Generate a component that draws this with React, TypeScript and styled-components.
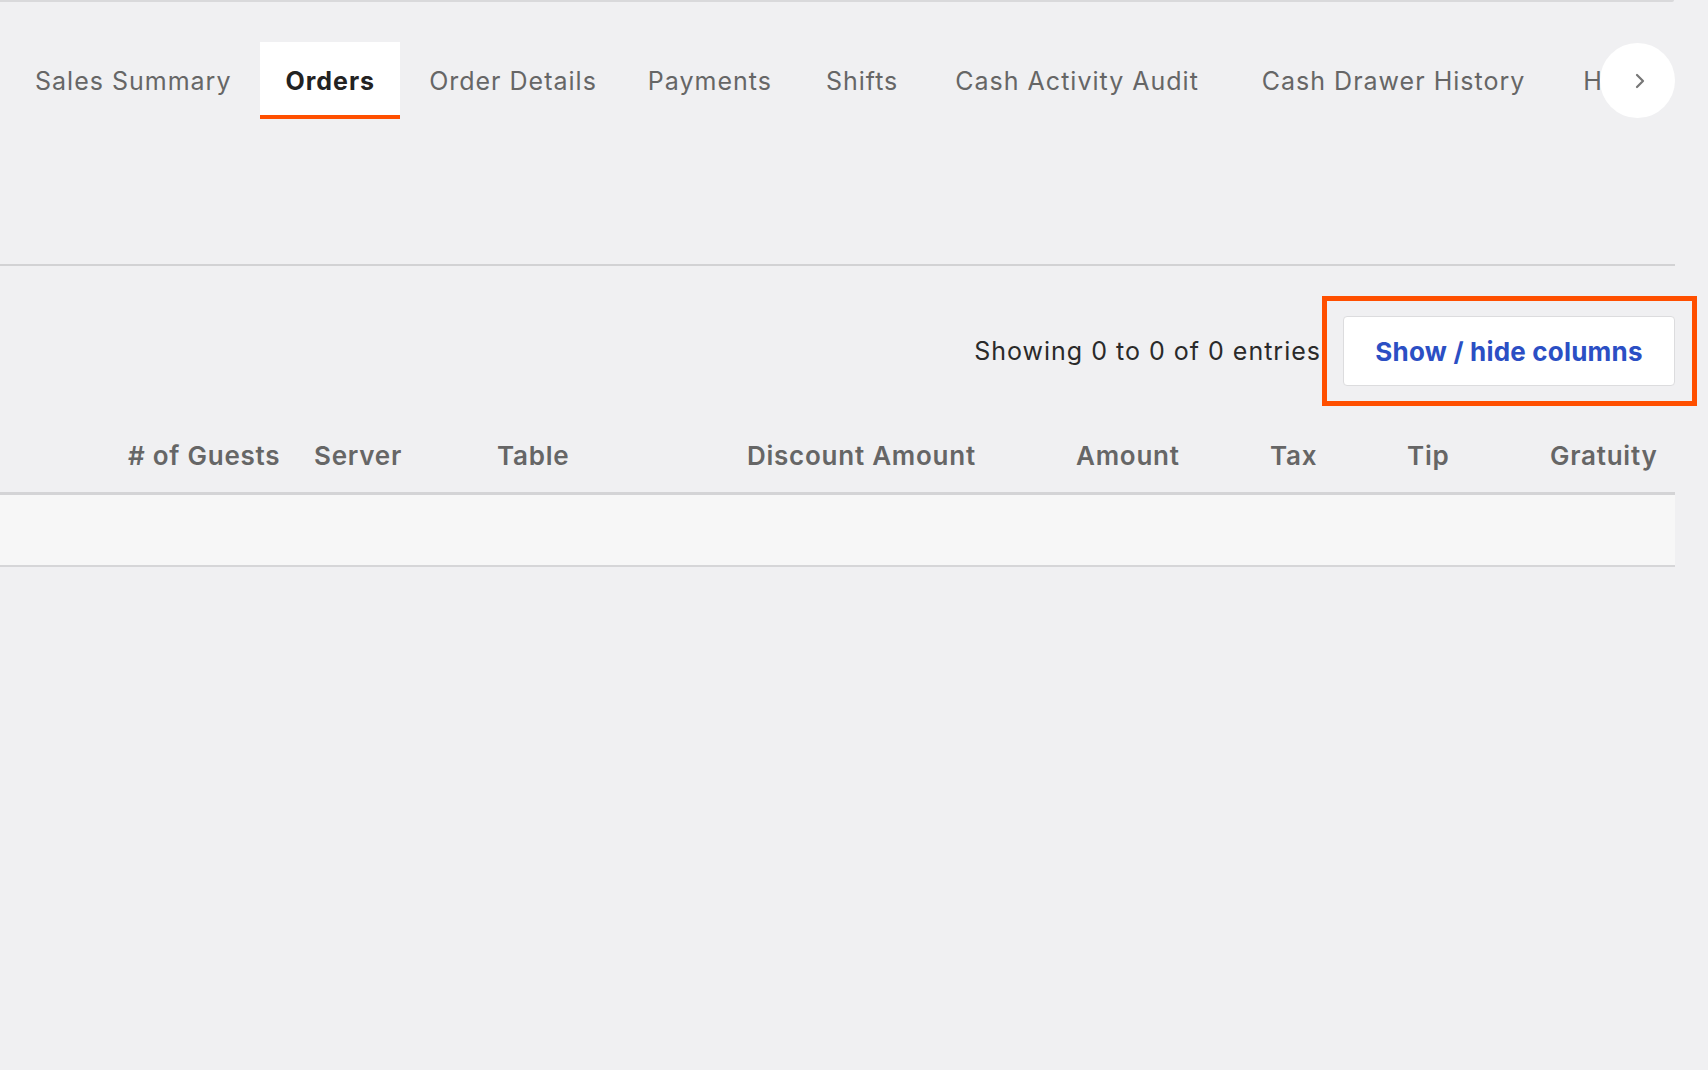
import styled, { createGlobalStyle } from "styled-components";

const GlobalStyle = createGlobalStyle`
  html, body {
    margin: 0;
    padding: 0;
    background: #f0f0f2;
    font-family: "Inter", "Noto Sans", sans-serif;
  }
  * { box-sizing: border-box; }
`;

const Page = styled.div`
  position: relative;
  width: 1708px;
  height: 1070px;
  overflow: hidden;
  background: #f0f0f2;
`;

const TopCard = styled.div`
  width: 1674px;
  height: 2px;
  border-bottom: 2px solid #d9d9db;
  border-bottom-right-radius: 6px;
`;

const TabBar = styled.div`
  position: relative;
  width: 1675px;
  margin-top: 40px;
  height: 77px;
`;

const TabStrip = styled.nav`
  display: flex;
  gap: 4px;
  padding-left: 10px;
  height: 100%;
  overflow: hidden;
  white-space: nowrap;
`;

const Tab = styled.div<{ $active?: boolean; $extra?: number }>`
  display: flex;
  align-items: center;
  flex-shrink: 0;
  padding: 4px ${(p) => 25 + (p.$extra ?? 0)}px 0 25px;
  height: 100%;
  font-size: 25px;
  letter-spacing: 1px;
  color: ${(p) => (p.$active ? "#222" : "#666")};
  font-weight: ${(p) => (p.$active ? 700 : 400)};
  background: ${(p) => (p.$active ? "#fff" : "transparent")};
  border-bottom: 4px solid ${(p) => (p.$active ? "#ff4f00" : "transparent")};
`;

const ScrollButton = styled.button`
  position: absolute;
  right: 0;
  top: 1px;
  width: 75px;
  height: 75px;
  border-radius: 50%;
  border: none;
  background: #fff;
  display: flex;
  align-items: center;
  justify-content: center;
  padding: 0 0 0 4px;
  cursor: pointer;
`;

const Divider = styled.div`
  width: 1675px;
  height: 2px;
  background: #d2d2d4;
  margin-top: 145px;
`;

const Toolbar = styled.div`
  position: relative;
  width: 1675px;
  display: flex;
  justify-content: flex-end;
  align-items: center;
  gap: 22px;
  margin-top: 50px;
`;

const Entries = styled.span`
  font-size: 25px;
  color: #2a2a2a;
  letter-spacing: 1px;
`;

const ColumnsButton = styled.button`
  width: 332px;
  height: 70px;
  background: #fff;
  border: 1px solid #dcdcde;
  border-radius: 4px;
  font-family: "Inter", "Noto Sans", sans-serif;
  font-size: 26px;
  font-weight: 700;
  color: #2b4fc4;
  letter-spacing: 0.2px;
  cursor: pointer;
`;

const Highlight = styled.div`
  position: absolute;
  right: -22px;
  top: -20px;
  width: 375px;
  height: 110px;
  border: 5px solid #ff4f00;
  pointer-events: none;
`;

const Table = styled.div`
  width: 1675px;
  margin-top: 33px;
`;

const HeaderRow = styled.div`
  display: grid;
  grid-template-columns: 128px 186px 183px 250px 329px 194px 137px 143px 125px;
  height: 76px;
  align-items: center;
  border-bottom: 3px solid #d4d4d6;
`;

const HeaderCell = styled.div`
  font-size: 26px;
  font-weight: 600;
  color: #666;
  letter-spacing: 0.75px;
  white-space: nowrap;
`;

const EmptyRow = styled.div`
  height: 72px;
  background: #f7f7f7;
  border-bottom: 2px solid #d6d6d8;
`;

// extra right padding where the real tabs sit a little further apart
const tabs: { label: string; extra?: number }[] = [
  { label: "Sales Summary" },
  { label: "Orders" },
  { label: "Order Details", extra: -3 },
  { label: "Payments" },
  { label: "Shifts", extra: 3 },
  { label: "Cash Activity Audit", extra: 9 },
  { label: "Cash Drawer History", extra: 4 },
  { label: "Hourly Sales" },
];

const columns = ["", "# of Guests", "Server", "Table", "Discount Amount", "Amount", "Tax", "Tip", "Gratuity"];

export default function App() {
  return (
    <>
      <GlobalStyle />
      <Page>
        <TopCard />
        <TabBar>
          <TabStrip>
            {tabs.map((t) => (
              <Tab key={t.label} $active={t.label === "Orders"} $extra={t.extra}>
                {t.label}
              </Tab>
            ))}
          </TabStrip>
          <ScrollButton aria-label="Next tabs">
            <svg width="18" height="18" viewBox="0 0 24 24" fill="none">
              <path d="M8 4l8 8-8 8" stroke="#777" strokeWidth="3" strokeLinecap="round" strokeLinejoin="round" />
            </svg>
          </ScrollButton>
        </TabBar>
        <Divider />
        <Toolbar>
          <Entries>Showing 0 to 0 of 0 entries</Entries>
          <ColumnsButton>Show / hide columns</ColumnsButton>
          <Highlight />
        </Toolbar>
        <Table>
          <HeaderRow>
            {columns.map((c, i) => (
              <HeaderCell key={i}>{c}</HeaderCell>
            ))}
          </HeaderRow>
          <EmptyRow />
        </Table>
      </Page>
    </>
  );
}
